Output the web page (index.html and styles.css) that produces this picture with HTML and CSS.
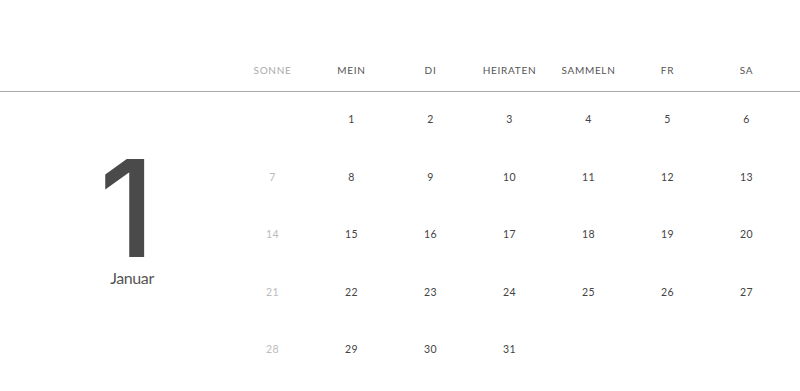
FILE: index.html
```html
<!DOCTYPE html>
<html lang="de">
<head>
<meta charset="utf-8">
<link rel="stylesheet" href="styles.css">
</head>
<body>
<div class="cal">
  <div class="head">
    <div class="spacer"></div>
    <div class="days">
      <div class="dname muted">SONNE</div>
      <div class="dname">MEIN</div>
      <div class="dname">DI</div>
      <div class="dname">HEIRATEN</div>
      <div class="dname">SAMMELN</div>
      <div class="dname">FR</div>
      <div class="dname">SA</div>
    </div>
  </div>
  <div class="body">
    <div class="month">
      <div class="big">1</div>
      <div class="mname">Januar</div>
    </div>
    <div class="grid">
      <div class="cell"></div>
      <div class="cell">1</div>
      <div class="cell">2</div>
      <div class="cell">3</div>
      <div class="cell">4</div>
      <div class="cell">5</div>
      <div class="cell">6</div>
      <div class="cell muted">7</div>
      <div class="cell">8</div>
      <div class="cell">9</div>
      <div class="cell">10</div>
      <div class="cell">11</div>
      <div class="cell">12</div>
      <div class="cell">13</div>
      <div class="cell muted">14</div>
      <div class="cell">15</div>
      <div class="cell">16</div>
      <div class="cell">17</div>
      <div class="cell">18</div>
      <div class="cell">19</div>
      <div class="cell">20</div>
      <div class="cell muted">21</div>
      <div class="cell">22</div>
      <div class="cell">23</div>
      <div class="cell">24</div>
      <div class="cell">25</div>
      <div class="cell">26</div>
      <div class="cell">27</div>
      <div class="cell muted">28</div>
      <div class="cell">29</div>
      <div class="cell">30</div>
      <div class="cell">31</div>
    </div>
  </div>
</div>
</body>
</html>
```
FILE: styles.css
```css
html, body {
  margin: 0;
  padding: 0;
  background: #fff;
}
.cal {
  width: 800px;
  font-family: "Lato", "Open Sans", sans-serif;
  color: #444;
}
.head {
  display: flex;
  padding-top: 62px;
  padding-bottom: 13px;
  border-bottom: 1px solid #aaa;
}
.spacer {
  width: 233px;
  flex: none;
}
.days, .grid {
  display: grid;
  grid-template-columns: repeat(7, 79px);
}
.dname {
  text-align: center;
  font-size: 10px;
  line-height: 16px;
  letter-spacing: 0.7px;
  color: #555;
}
.dname.muted {
  color: #aaa;
}
.body {
  display: flex;
}
.month {
  width: 233px;
  flex: none;
  box-sizing: border-box;
  padding-left: 31px;
  padding-top: 66px;
  display: flex;
  flex-direction: column;
  align-items: center;
}
.big {
  font-family: "Inter", sans-serif;
  font-size: 135px;
  line-height: 100px;
  height: 100px;
  font-weight: 500;
  color: #4a4a4a;
  margin-left: -10px;
}
.mname {
  font-family: "Lato", sans-serif;
  font-size: 16px;
  line-height: 20px;
  margin-top: 10px;
  color: #555;
  letter-spacing: -0.4px;
}
.grid {
  grid-auto-rows: 57.5px;
}
.cell {
  box-sizing: border-box;
  padding-top: 19px;
  text-align: center;
  font-size: 10.5px;
  line-height: 16px;
  color: #444;
  letter-spacing: 0.3px;
}
.cell.muted {
  color: #bbb;
}
```
